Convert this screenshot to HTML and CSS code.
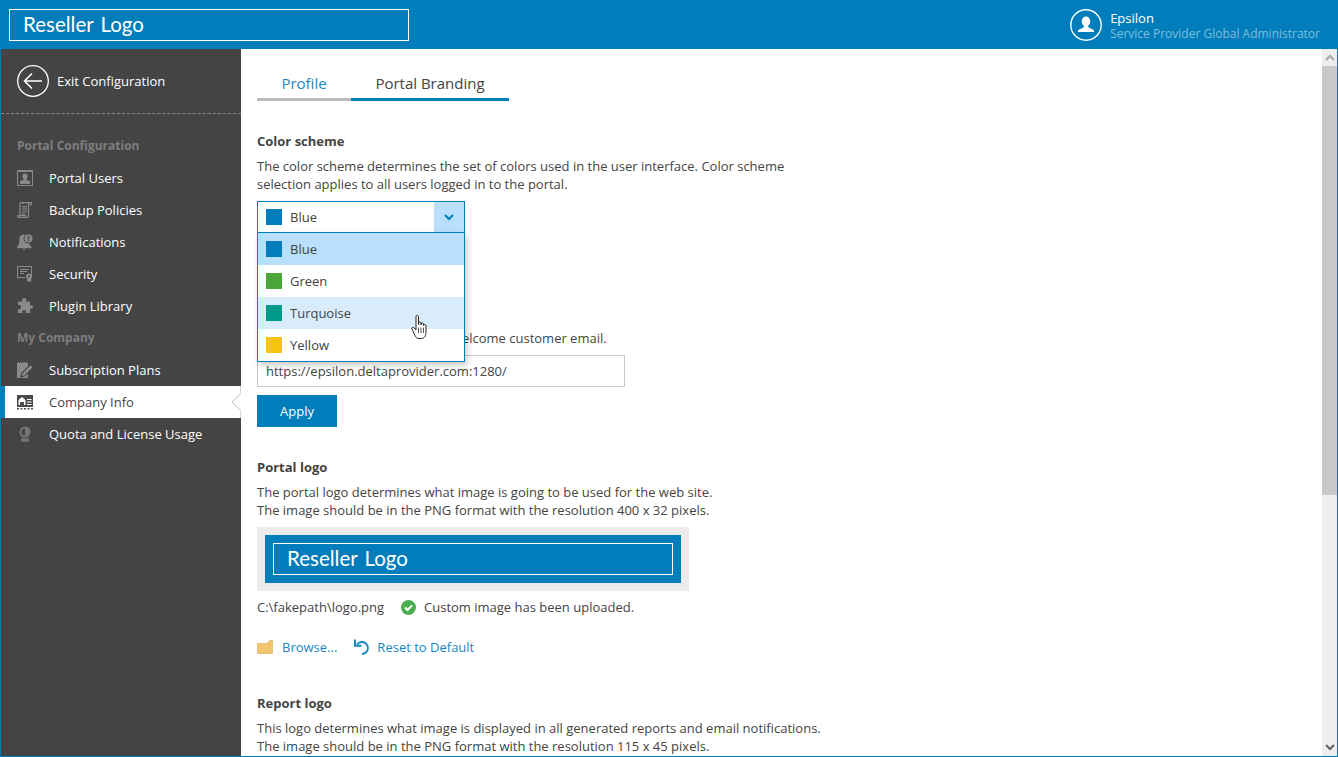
FILE: index.html
```html
<!DOCTYPE html>
<html lang="en">
<head>
<meta charset="utf-8">
<title>Portal Branding</title>
<link rel="stylesheet" href="styles.css">
</head>
<body>
<div class="app">
  <header class="topbar">
    <div class="logo logo-top"><span class="logo-text">Reseller Logo</span></div>
    <div class="account">
      <svg class="avatar" viewBox="0 0 32 32" width="32" height="32"><circle cx="16" cy="16" r="15.200" fill="none" stroke="#fff" stroke-width="1.400"/><path fill="#fff" d="M16 7.500c2.600 0 4.300 2.100 4.300 4.800 0 2-.9 3.600-2.100 4.500v1.500l4.600 2.200c.9.400 1.200 1 1.200 1.900v.6H8v-.6c0-.9.300-1.500 1.200-1.900l4.600-2.200v-1.500c-1.200-.9-2.100-2.500-2.100-4.500 0-2.700 1.700-4.800 4.300-4.800z"/></svg>
      <div class="account-text">
        <div class="account-name">Epsilon</div>
        <div class="account-role">Service Provider Global Administrator</div>
      </div>
    </div>
  </header>
  <div class="body">
    <nav class="sidebar">
      <div class="exit">
        <svg viewBox="0 0 32 32" width="32" height="32"><circle cx="16" cy="16" r="15.300" fill="none" stroke="#fff" stroke-width="1.300"/><path fill="none" stroke="#fff" stroke-width="1.600" d="M25 16H8M15 8.500 7.500 16l7.500 7.500"/></svg>
        <span>Exit Configuration</span>
      </div>
      <div class="nav">
        <div class="nav-head">Portal Configuration</div>
        <div class="nav-item"><svg viewBox="0 0 16 16" width="16" height="16"><path fill="#8a8a8a" d="M0 0h16v16H0z"/><path fill="#444" d="M1 2h14v13H1z"/><path fill="#8a8a8a" d="M8 3.500c1.700 0 2.700 1.200 2.700 2.800 0 1.100-.5 2-1.200 2.500v1l3.500 1.500V14H3v-2.700l3.500-1.500v-1c-.7-.5-1.200-1.400-1.200-2.500C5.300 4.700 6.300 3.500 8 3.500z"/></svg><span>Portal Users</span></div>
        <div class="nav-item"><svg viewBox="0 0 16 16" width="16" height="16"><path fill="none" stroke="#8a8a8a" stroke-width="1.200" d="M3 14.500V2c0-.8.500-1.400 1.300-1.400h10.200L14 3h-2.500M4.300.6c1 0 1.700.6 1.700 1.400M11.500 1v12.500c0 1.200-.7 1.900-1.700 1.900H1c-.4 0-.5-.4-.4-.7L1 13.500h7.500v1.500"/><path fill="#8a8a8a" d="M5 4h5v1.200H5zM5 6.500h5v1.200H5zM5 9h5v1.200H5zM5 11.500h3v1.200H5z"/></svg><span>Backup Policies</span></div>
        <div class="nav-item"><svg viewBox="0 0 16 16" width="16" height="16"><path fill="#8a8a8a" d="M7 .5c3.500 0 5 2.800 5 6 0 3 .8 5 2.500 6.500v1.200H0V13c1.700-1.500 2.300-3.500 2.300-6.500 0-3.200 1.200-6 4.700-6zM5.300 15h3.400c-.2.700-.9 1-1.700 1s-1.500-.3-1.700-1z"/><circle cx="11.500" cy="4.500" r="5" fill="#444"/><circle cx="11.500" cy="4.500" r="4" fill="#8a8a8a"/><path fill="#444" d="M10.800 2h1.400v3.200h-1.400zM10.800 5.700h1.400v1.300h-1.400z"/></svg><span>Notifications</span></div>
        <div class="nav-item"><svg viewBox="0 0 16 16" width="16" height="16"><path fill="#8a8a8a" fill-rule="evenodd" d="M0 0h15v9h-1V1H1v10h7v1H0z"/><path fill="#8a8a8a" d="M3 3h9v1H3zM3 5h7v1H3zM3 7h4v1H3z"/><circle cx="12" cy="10.500" r="3" fill="#8a8a8a"/><circle cx="12" cy="10.500" r="1" fill="#444"/><path fill="#8a8a8a" d="M10 13h4.200v3l-2.100-1-2.100 1z"/></svg><span>Security</span></div>
        <div class="nav-item"><svg viewBox="0 0 16 16" width="16" height="16"><path fill="#8a8a8a" d="M5.500 3.500c-1-2 0-3.500 1.700-3.500s2.700 1.500 1.700 3.500H13v4c2-1 3 .2 3 1.500s-1 2.500-3 1.500v4.500H8.500c1-2-.1-3-1.400-3s-2.400 1-1.400 3H1v-4c2 1 3-.2 3-1.700S3 6 1 7V3.500z"/></svg><span>Plugin Library</span></div>
        <div class="nav-head">My Company</div>
        <div class="nav-item"><svg viewBox="0 0 16 16" width="16" height="16"><path fill="#8a8a8a" d="M0 1h1V0h1v1h1V0h1v1h1V0h1v1h1V0h1v1h1V0h1v1h1v15H0z"/><path fill="#8a8a8a" stroke="#444" stroke-width="1.200" d="m13.500 2.500 2.800 2.800-8.500 8.500-3.800 1 1-3.800z"/></svg><span>Subscription Plans</span></div>
        <div class="nav-item active"><svg viewBox="0 0 16 16" width="16" height="16"><path fill="#4a4a4a" d="M0 1h16v12H0zM0 14h2v1.500H0zM3.500 14h2v1.500h-2zM7 14h2v1.500H7zM10.500 14h2v1.500h-2zM14 14h2v1.500h-2z"/><path fill="#fff" d="M5 3 1.500 6v5H3V8h4v3h1.500V6zM10 5h4.500v1H10zM10 7.500h4.500v1H10zM10 10h4.500v1H10z"/></svg><span>Company Info</span></div>
        <div class="nav-item"><svg viewBox="0 0 16 16" width="16" height="16"><circle cx="8" cy="6" r="5.500" fill="#747474"/><path fill="#444" d="M8 2.500a3.500 3.500 0 0 0 0 7z"/><path fill="#747474" d="M4.500 11.500 8 12.500l3.500-1 .5 4.500-2-.6-2 .6-2-.6-2 .6z"/></svg><span>Quota and License Usage</span></div>
      </div>
    </nav>
    <main class="content">
      <div class="tabs">
        <div class="tab tab-profile">Profile</div>
        <div class="tab tab-branding">Portal Branding</div>
      </div>
      <h3 class="heading first">Color scheme</h3>
      <p class="text">The color scheme determines the set of colors used in the user interface. Color scheme<br>selection applies to all users logged in to the portal.</p>
      <div class="select-wrap">
        <div class="select">
          <i class="swatch blue"></i><span>Blue</span>
          <span class="select-btn"><svg viewBox="0 0 10 7" width="10" height="7"><path fill="none" stroke="#007dba" stroke-width="2" d="M1 1l4 4 4-4"/></svg></span>
        </div>
        <div class="menu">
          <div class="option selected"><i class="swatch blue"></i><span>Blue</span></div>
          <div class="option"><i class="swatch green"></i><span>Green</span></div>
          <div class="option hover"><i class="swatch turquoise"></i><span>Turquoise</span></div>
          <div class="option"><i class="swatch yellow"></i><span>Yellow</span></div>
        </div>
        <svg class="cursor" viewBox="0 0 17 25" width="17" height="26"><path fill="#fff" stroke="#222" stroke-width="1" stroke-linejoin="round" d="M5 2c0-1.300 2.500-1.300 2.500 0v8V8.500c0-1.200 2.500-1.200 2.500 0v2V9.500c0-1.200 2.500-1.200 2.500 0v1.500c0-1.200 2.500-1.200 2.500 0v7c0 3-1.500 6-4.500 6H8c-2 0-3-1-4-3l-3-6.500c-.6-1.300 1-2.200 2-1.200l2 2.200z"/><path fill="none" stroke="#222" stroke-width=".8" d="M7.500 13v5.500M10 13v5.500M12.500 13v5.500"/></svg>
      </div>
      <p class="text after-select">Portal URL to be included in the welcome customer email.</p>
      <div class="input">https://epsilon.deltaprovider.com:1280/</div>
      <div class="apply">Apply</div>
      <h3 class="heading section">Portal logo</h3>
      <p class="text">The portal logo determines what image is going to be used for the web site.<br>The image should be in the PNG format with the resolution 400 x 32 pixels.</p>
      <div class="logo-preview">
        <div class="logo-blue"><div class="logo logo-small"><span class="logo-text">Reseller Logo</span></div></div>
      </div>
      <div class="upload-status">
        <span>C:\fakepath\logo.png</span>
        <svg viewBox="0 0 16 16" width="15" height="15"><circle cx="8" cy="8" r="8" fill="#4cae4c"/><path fill="none" stroke="#fff" stroke-width="2.200" d="M4.300 8l2.700 2.700 4.700-5"/></svg>
        <span>Custom image has been uploaded.</span>
      </div>
      <div class="actions">
        <svg class="ic-folder" viewBox="0 0 16 14" width="16" height="14"><path fill="#f2c66d" stroke="#d8a94e" stroke-width=".6" d="M.5 3.500h9l3.500-3h2.500v13H.5z"/></svg>
        <a class="link browse">Browse...</a>
        <svg class="ic-reset" viewBox="0 0 16 16" width="16" height="16"><path fill="none" stroke="#1b87c0" stroke-width="1.800" d="M4 5.500A6 6 0 1 1 9 15"/><path fill="none" stroke="#1b87c0" stroke-width="2" d="M2 .5v6.200h6.500"/></svg>
        <a class="link">Reset to Default</a>
      </div>
      <h3 class="heading report">Report logo</h3>
      <p class="text">This logo determines what image is displayed in all generated reports and email notifications.<br>The image should be in the PNG format with the resolution 115 x 45 pixels.</p>
    </main>
    <div class="scrollbar">
      <div class="sb-btn"><svg viewBox="0 0 10 7" width="10" height="7"><path fill="none" stroke="#aaa" stroke-width="2.200" d="M1 6l4-4 4 4"/></svg></div>
      <div class="sb-thumb"></div>
      <div class="sb-track"></div>
      <div class="sb-btn"><svg viewBox="0 0 10 7" width="10" height="7"><path fill="none" stroke="#666" stroke-width="2.200" d="M1 1l4 4 4-4"/></svg></div>
    </div>
  </div>
</div>
</body>
</html>
```
FILE: styles.css
```css
* { box-sizing: border-box; }
html, body { margin: 0; height: 100%; overflow: hidden; background: #fff; }
body { font-family: "Open Sans", sans-serif; font-size: 13px; line-height: 18px; color: #444; }
.app { width: 1338px; height: 757px; display: flex; flex-direction: column; border: 1px solid #007dba; border-width: 0 1px 1px 1px; overflow: hidden; }
.topbar { height: 49px; margin: 0 -1px; background: #007dba; display: flex; align-items: flex-start; justify-content: space-between; flex: none; }
.logo { border: 1px solid #fff; width: 400px; height: 32px; display: flex; align-items: center; }
.logo-top { margin: 9px 0 0 9px; }
.logo-text { font-family: "Lato", sans-serif; font-weight: 400; font-size: 20.500px; word-spacing: 2px; color: #fff; padding-left: 13px; line-height: 28px; margin-top: -2px; }
.account { display: flex; margin: 9px 18px 0 0; gap: 8px; }
.avatar { flex: none; }
.account-text { line-height: 15px; margin-top: 2px; white-space: nowrap; }
.account-name { color: #fff; }
.account-role { color: #7fbddc; font-size: 12px; }
.body { flex: 1; display: flex; min-height: 0; }
.sidebar { width: 240px; background: #444; color: #fff; flex: none; }
.exit { height: 65px; padding: 16px 16px; display: flex; align-items: center; gap: 8px; border-bottom: 1px dashed #8a8a8a; }
.nav { margin-top: 16px; }
.nav-head { height: 32px; line-height: 31px; padding-left: 16px; font-weight: 700; font-size: 12px; color: #7e7e7e; }
.nav-item { height: 32px; display: flex; align-items: center; padding-left: 16px; gap: 16px; position: relative; }
.nav-item.active { background: #fff; color: #444; margin-left: -1px; padding-left: 12px; border-left: 5px solid #007dba; border-right: 1px solid #d8d8d8; }
.nav-item.active::after { content: ""; position: absolute; right: -6px; top: 10px; width: 11px; height: 11px; background: #fff; border: 1px solid #ccc; border-width: 0 0 1px 1px; transform: rotate(45deg); }
.content { flex: 1; padding: 24px 0 0 16px; overflow: hidden; min-width: 0; }
.tabs { display: flex; height: 28px; font-size: 15px; line-height: 20px; }
.tab { text-align: center; border-bottom: 3px solid #bbb; }
.tab-profile { width: 94px; color: #1b87c0; }
.tab-branding { width: 158px; border-bottom-color: #007dba; }
.heading { font-size: 13px; line-height: 18px; font-weight: 700; margin: 0; color: #444; }
.heading.first { margin-top: 31px; }
.heading.section { margin-top: 31px; }
.heading.report { margin-top: 38px; }
.text { margin: 7px 0 0; }
.text.after-select { margin-top: 96px; }
.select-wrap { position: relative; width: 208px; margin-top: 8px; height: 32px; z-index: 1; }
.select { height: 32px; border: 1px solid #007dba; background: #fff; display: flex; align-items: center; padding-left: 8px; gap: 8px; }
.select-btn { margin-left: auto; width: 30px; height: 30px; background: #b8dffb; display: flex; align-items: center; justify-content: center; }
.swatch { width: 16px; height: 16px; display: block; flex: none; }
.blue { background: #007dba; }
.green { background: #4aa638; }
.turquoise { background: #009a8a; }
.yellow { background: #f6c50f; }
.menu { position: absolute; left: 0; top: 32px; width: 208px; height: 129px; border: 1px solid #007dba; border-top: 0; background: #fff; box-shadow: 2px 3px 6px rgba(0,0,0,.22); }
.option { height: 32px; display: flex; align-items: center; padding-left: 8px; gap: 8px; }
.option.selected { background: #b8dffb; }
.option.hover { background: #d9ecfc; }
.cursor { position: absolute; left: 154px; top: 113px; }
.input { margin-top: 8px; width: 368px; height: 32px; border: 1px solid #c8c8c8; padding-left: 8px; line-height: 30px; }
.apply { margin-top: 8px; width: 80px; height: 32px; background: #007dba; color: #fff; text-align: center; line-height: 33px; }
.logo-preview { margin-top: 8px; width: 432px; height: 64px; background: #ececec; padding: 8px; }
.logo-blue { height: 48px; background: #007dba; padding: 8px; }
.logo-small { width: 400px; }
.upload-status { margin-top: 7px; display: flex; align-items: center; gap: 8px; }
.upload-status svg { margin-left: 9px; }
.actions { margin-top: 22px; display: flex; align-items: center; }
.ic-folder { margin-right: 9px; }
.link { color: #1b87c0; }
.browse { margin-right: 16px; }
.ic-reset { margin-right: 8px; }
.scrollbar { width: 15px; flex: none; background: #eee; display: flex; flex-direction: column; }
.sb-btn { height: 17px; display: flex; align-items: center; justify-content: center; flex: none; }
.sb-thumb { height: 429px; background: #c8c8c8; flex: none; }
.sb-track { flex: 1; }
```
